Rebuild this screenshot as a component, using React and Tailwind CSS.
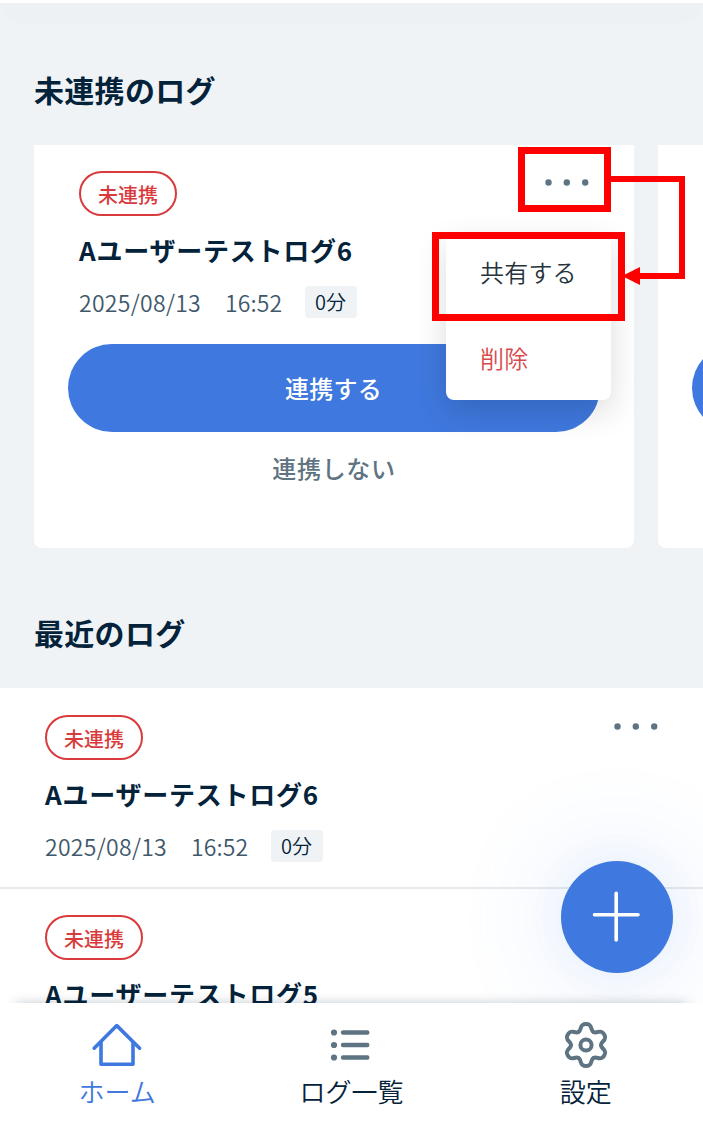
import React, { useState } from 'react';

const logs = [
  { id: 6, status: '未連携', title: 'Aユーザーテストログ6', date: '2025/08/13', time: '16:52', duration: '0分' },
  { id: 5, status: '未連携', title: 'Aユーザーテストログ5', date: '2025/08/13', time: '16:52', duration: '0分' }
];

const HomeIcon = () => (
  <svg width="52" height="46" viewBox="0 0 52 46" fill="none" stroke="currentColor" strokeWidth="3.6">
    <path d="M3.2 26.2 25.8 3.6l22.8 22.6" strokeLinecap="round" strokeLinejoin="round" />
    <path d="M10 20v22.3h32V20" strokeLinejoin="round" />
  </svg>
);

const ListIcon = () => (
  <svg width="46" height="46" viewBox="0 0 46 46" fill="none" stroke="currentColor" strokeWidth="4.4" strokeLinecap="round">
    <path d="M15 10.5h24.3M15 23h24.3M15 35.5h24.3" />
    <g fill="currentColor" stroke="none">
      <circle cx="6" cy="10.5" r="3.1" />
      <circle cx="6" cy="23" r="3.1" />
      <circle cx="6" cy="35.5" r="3.1" />
    </g>
  </svg>
);

// One tooth, repeated every 60 degrees
const GearIcon = () => (
  <svg width="50" height="50" viewBox="-25 -25 50 50" fill="none" stroke="currentColor" strokeWidth="4" strokeLinecap="round">
    {[0, 60, 120, 180, 240, 300].map((angle) => (
      <path key={angle} d="M-7.5-13C-3.9-15.1-7-21 0-21S3.9-15.1 7.5-13" transform={`rotate(${angle})`} />
    ))}
    <circle r="5.6" />
  </svg>
);

const tabs = [
  { id: 'home', label: 'ホーム', icon: HomeIcon },
  { id: 'logs', label: 'ログ一覧', icon: ListIcon },
  { id: 'settings', label: '設定', icon: GearIcon }
];

const MoreButton = ({ onClick }) => (
  <button className="h-6 w-11 text-[#5f7482]" onClick={onClick} aria-label="menu">
    <svg width="44" height="24" viewBox="0 0 44 24" fill="currentColor">
      <circle cx="3.5" cy="11.5" r="3.2" />
      <circle cx="21.8" cy="11.5" r="3.2" />
      <circle cx="40.2" cy="11.5" r="3.2" />
    </svg>
  </button>
);

const LogSummary = ({ log, onMenu }) => (
  <div>
    <div className="flex items-start justify-between">
      <span className="flex h-[45px] w-[98px] items-center justify-center rounded-full border-2 border-[#d93b3d] pt-[3px] text-[20px] leading-none font-medium text-[#d93b3d]">
        {log.status}
      </span>
      <MoreButton onClick={onMenu} />
    </div>
    <h3 className="mt-[14px] h-10 text-[26px] leading-10 font-bold tracking-[0.75px] whitespace-nowrap">
      {log.title}
    </h3>
    <div className="mt-4 flex h-8 items-center whitespace-nowrap">
      <span className="w-[146px] text-[23px] font-[350] tracking-[0.3px] text-[#40586a]">{log.date}</span>
      <span className="w-20 text-[23px] font-[350] tracking-[0.1px] text-[#40586a]">{log.time}</span>
      <span className="flex h-8 w-[52px] items-center justify-center rounded bg-[#eff3f6] pr-px text-[20px] font-[350]">
        {log.duration}
      </span>
    </div>
  </div>
);

const PendingCard = ({ log, onMenu }) => (
  <div className="h-[403px] w-[600px] shrink-0 rounded-b-lg bg-white pt-[26px]">
    <div className="px-[45px]">
      <LogSummary log={log} onMenu={onMenu} />
    </div>
    <div className="mt-[26px] px-[34px]">
      <button className="block h-[88px] w-full rounded-full bg-[#3f78de] pr-px text-[24px] font-medium tracking-[0.3px] text-white">
        連携する
      </button>
      <button className="mt-[14px] block h-11 w-full text-[24px] font-medium tracking-[0.7px] text-[#5f7482]">
        連携しない
      </button>
    </div>
  </div>
);

// Neighbouring card, only its left edge is on screen
const PeekCard = () => (
  <div className="h-[403px] w-[600px] shrink-0 rounded-b-lg bg-white px-[34px] pt-[199px]">
    <div className="h-[88px] rounded-full bg-[#3f78de]" />
  </div>
);

const ActionMenu = () => (
  <div className="absolute top-[232px] left-[446px] flex h-[168px] w-[165px] flex-col rounded-lg bg-white text-[24px] tracking-[0.2px] shadow-[0_12px_32px_rgba(0,0,0,0.14)]">
    <button className="h-[82px] pb-[3px] pl-[34px] text-left font-[350] text-[#26333d]">共有する</button>
    <button className="h-[86px] pt-px pl-[34px] text-left font-[350] text-[#d94a4c]">削除</button>
  </div>
);

// Red callouts: menu button -> share item
const Callouts = () => (
  <>
    <div className="pointer-events-none absolute top-[147px] left-[518px] h-[65px] w-[93px] border-7 border-[#ff0000]" />
    <div className="pointer-events-none absolute top-[232px] left-[432px] h-[89px] w-[193px] border-7 border-[#ff0000]" />
    <svg className="pointer-events-none absolute top-[170px] left-[610px]" width="80" height="120" viewBox="0 0 80 120">
      <path d="M0 9h72v97H28" fill="none" stroke="#ff0000" strokeWidth="6" />
      <path d="M12 106l18-9v18z" fill="#ff0000" />
    </svg>
  </>
);

const App = () => {
  const [activeTab, setActiveTab] = useState('home');
  const [menuOpen, setMenuOpen] = useState(true);

  const toggleMenu = () => setMenuOpen(!menuOpen);

  return (
    <div lang="ja" className="relative flex h-[1125px] w-[703px] flex-col overflow-hidden bg-[#eff3f6] font-['Noto_Sans_CJK_JP',sans-serif] text-[#04233a]">
      <div className="flex min-h-0 flex-1 flex-col overflow-hidden">
        {/* Bottom edge of the header */}
        <div className="h-[3px] shrink-0 bg-white" />
        <div className="h-5 shrink-0 rounded-b-[20px] bg-[#edf1f3]" />

        <h2 className="mt-11 h-11 shrink-0 pl-[34px] text-[30px] leading-[44px] font-bold tracking-[0.3px]">
          未連携のログ
        </h2>
        <div className="mt-[34px] flex shrink-0 gap-6 pl-[34px]">
          <PendingCard log={logs[0]} onMenu={toggleMenu} />
          <PeekCard />
        </div>

        <h2 className="mt-[62px] h-11 shrink-0 pl-[34px] text-[30px] leading-[44px] font-bold tracking-[0.3px]">
          最近のログ
        </h2>
        <div className="mt-[34px] shrink-0 divide-y-2 divide-[#e7eaec] bg-white">
          {logs.map((log, index) => (
            <div key={log.id} className={`px-[45px] ${index === 0 ? 'h-[201px] pt-[27px]' : 'h-[200px] pt-[26px]'}`}>
              <LogSummary log={log} onMenu={toggleMenu} />
            </div>
          ))}
        </div>
      </div>

      {/* Floating add button */}
      <button className="absolute top-[861px] left-[561px] h-28 w-28 rounded-full bg-[#3f78de] shadow-[0_0_110px_rgba(63,130,240,0.2),0_0_40px_rgba(63,130,240,0.06)]" aria-label="add">
        <svg width="112" height="112" viewBox="0 0 112 112" stroke="white" strokeWidth="3.6" strokeLinecap="round">
          <path d="M33.5 53.7h43.5M55.2 32.2v46.8" />
        </svg>
      </button>

      {/* Tab bar */}
      <nav className="relative h-[122px] shrink-0">
        <div className="absolute inset-x-4 top-0.5 h-10 shadow-[0_0_12px_rgba(4,35,58,0.32)]" />
        <div className="relative grid h-full grid-cols-3 bg-white">
          {tabs.map((tab) => (
            <button
              key={tab.id}
              className="flex flex-col items-center pt-[15px]"
              onClick={() => setActiveTab(tab.id)}
            >
              <span className={`flex h-[54px] items-center ${activeTab === tab.id ? 'text-[#3f78de]' : 'text-[#5f7482]'}`}>
                <tab.icon />
              </span>
              <span className={`mt-px text-[26px] leading-9 font-[350] ${activeTab === tab.id ? 'text-[#3f78de]' : ''}`}>
                {tab.label}
              </span>
            </button>
          ))}
        </div>
      </nav>

      {menuOpen && <ActionMenu />}
      <Callouts />
    </div>
  );
};

export default App;
